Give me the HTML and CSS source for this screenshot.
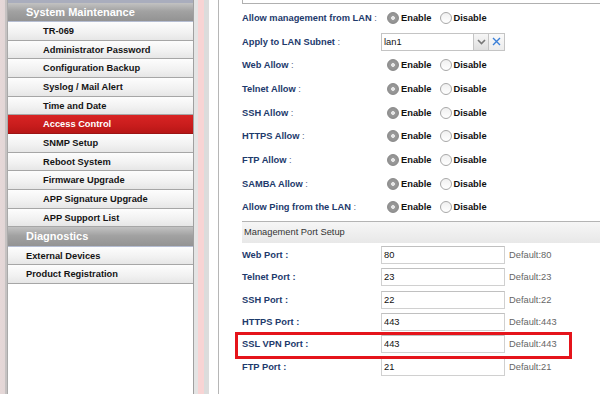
FILE: index.html
```html
<!DOCTYPE html>
<html lang="en">
<head>
  <meta charset="UTF-8">
  <title>Access Control</title>
  <link rel="stylesheet" href="styles.css">
</head>
<body>

  <div class="edge"></div>

  <div class="sidebar">
    <div class="menu-cut"></div>
    <div class="menu-head">System Maintenance</div>
    <div class="menu-item sub">TR-069</div>
    <div class="menu-item sub">Administrator Password</div>
    <div class="menu-item sub">Configuration Backup</div>
    <div class="menu-item sub">Syslog / Mail Alert</div>
    <div class="menu-item sub">Time and Date</div>
    <div class="menu-item sub active">Access Control</div>
    <div class="menu-item sub">SNMP Setup</div>
    <div class="menu-item sub">Reboot System</div>
    <div class="menu-item sub">Firmware Upgrade</div>
    <div class="menu-item sub">APP Signature Upgrade</div>
    <div class="menu-item sub">APP Support List</div>
    <div class="menu-head tall">Diagnostics</div>
    <div class="menu-item">External Devices</div>
    <div class="menu-item">Product Registration</div>
  </div>

  <div class="divider"></div>

  <div class="content">
    <div class="prev-box"></div>

    <div class="allow-list">
      <div class="form-row">
        <span class="label">Allow management from LAN <span class="colon">:</span></span>
        <span class="value">
          <span class="radio on"></span><span class="opt">Enable</span>
          <span class="radio"></span><span class="opt off">Disable</span>
        </span>
      </div>
      <div class="form-row">
        <span class="label">Apply to LAN Subnet <span class="colon">:</span></span>
        <span class="value">
          <span class="select">lan1</span>
          <span class="select-btn">
            <svg width="9" height="6" viewBox="0 0 9 6"><path d="M1 1 L4.5 4.5 L8 1" fill="none" stroke="#777" stroke-width="1.6"/></svg>
          </span>
          <span class="clear-btn">
            <svg width="9" height="9" viewBox="0 0 9 9"><path d="M1 1 L8 8 M8 1 L1 8" fill="none" stroke="#3a7fd8" stroke-width="1.4"/></svg>
          </span>
        </span>
      </div>
      <div class="form-row">
        <span class="label">Web Allow <span class="colon">:</span></span>
        <span class="value">
          <span class="radio on"></span><span class="opt">Enable</span>
          <span class="radio"></span><span class="opt off">Disable</span>
        </span>
      </div>
      <div class="form-row">
        <span class="label">Telnet Allow <span class="colon">:</span></span>
        <span class="value">
          <span class="radio on"></span><span class="opt">Enable</span>
          <span class="radio"></span><span class="opt off">Disable</span>
        </span>
      </div>
      <div class="form-row">
        <span class="label">SSH Allow <span class="colon">:</span></span>
        <span class="value">
          <span class="radio on"></span><span class="opt">Enable</span>
          <span class="radio"></span><span class="opt off">Disable</span>
        </span>
      </div>
      <div class="form-row">
        <span class="label">HTTPS Allow <span class="colon">:</span></span>
        <span class="value">
          <span class="radio on"></span><span class="opt">Enable</span>
          <span class="radio"></span><span class="opt off">Disable</span>
        </span>
      </div>
      <div class="form-row">
        <span class="label">FTP Allow <span class="colon">:</span></span>
        <span class="value">
          <span class="radio on"></span><span class="opt">Enable</span>
          <span class="radio"></span><span class="opt off">Disable</span>
        </span>
      </div>
      <div class="form-row">
        <span class="label">SAMBA Allow <span class="colon">:</span></span>
        <span class="value">
          <span class="radio on"></span><span class="opt">Enable</span>
          <span class="radio"></span><span class="opt off">Disable</span>
        </span>
      </div>
      <div class="form-row">
        <span class="label">Allow Ping from the LAN <span class="colon">:</span></span>
        <span class="value">
          <span class="radio on"></span><span class="opt">Enable</span>
          <span class="radio"></span><span class="opt off">Disable</span>
        </span>
      </div>
    </div>

    <div class="section-head">Management Port Setup</div>

    <div class="port-list">
      <div class="port-row">
        <span class="label">Web Port :</span>
        <input class="port-input" type="text" value="80">
        <span class="default">Default:80</span>
      </div>
      <div class="port-row">
        <span class="label">Telnet Port :</span>
        <input class="port-input" type="text" value="23">
        <span class="default">Default:23</span>
      </div>
      <div class="port-row">
        <span class="label">SSH Port :</span>
        <input class="port-input" type="text" value="22">
        <span class="default">Default:22</span>
      </div>
      <div class="port-row">
        <span class="label">HTTPS Port :</span>
        <input class="port-input" type="text" value="443">
        <span class="default">Default:443</span>
      </div>
      <div class="port-row">
        <span class="label">SSL VPN Port :</span>
        <input class="port-input" type="text" value="443">
        <span class="default">Default:443</span>
      </div>
      <div class="port-row">
        <span class="label">FTP Port :</span>
        <input class="port-input" type="text" value="21">
        <span class="default">Default:21</span>
      </div>
    </div>

    <div class="highlight"></div>
  </div>

</body>
</html>
```

FILE: styles.css
```css
html, body {
  height: 100%;
}

body {
  margin: 0;
  display: flex;
  overflow: hidden;
  font-family: 'Liberation Sans', Arial, sans-serif;
  font-size: 9.3px;
  background: #fff;
}

/* left page edge */
.edge {
  width: 7px;
  flex: none;
  background: linear-gradient(to right, #e6d8d8 0, #e2d6d6 5px, #c6c2c2 5px, #c6c2c2 7px);
}

/* side menu */
.sidebar {
  width: 185px;
  flex: none;
  border-left: 1px solid #a9a9a9;
  border-right: 1px solid #a0a0a0;
  background: #fff;
}

.menu-cut {
  height: 3px;
  background: #a9adbd;
}

.menu-head {
  height: 19px;
  line-height: 19px;
  padding-left: 18px;
  font-size: 11px;
  font-weight: bold;
  color: #fff;
  background: linear-gradient(#c2c2c2, #a2a2a2 45%, #939393);
  border-bottom: 1px solid #b5bdd2;
  box-sizing: border-box;
}

.menu-head.tall {
  height: 19.4px;
  line-height: 19px;
}

.menu-item {
  height: 18.67px;
  line-height: 18px;
  padding-left: 18px;
  box-sizing: border-box;
  font-weight: bold;
  color: #141414;
  background: linear-gradient(#fdfdfd, #f1f1f1 60%, #e6e6e6);
  border-bottom: 1px solid #a6a6a6;
}

.menu-item.sub {
  padding-left: 35px;
}

.menu-item.active {
  color: #fff;
  background: linear-gradient(#d82424, #c81c1c 60%, #b71616);
  border-bottom-color: #9c1414;
}

/* strips between menu and page */
.divider {
  width: 24px;
  flex: none;
  border-right: 1px solid #b6b6b6;
  background: linear-gradient(to right, #e4e4e4 0, #e4e4e4 4px, #f8d4d4 4px, #f8d4d4 10px, #dcdcdc 10px, #dcdcdc 15px, #fff 15px);
}

/* main page */
.content {
  flex: 1;
  position: relative;
  padding-left: 23px;
}

.prev-box {
  height: 3px;
  border-left: 1px solid #b0b0b0;
  border-bottom: 1px solid #b0b0b0;
}

.allow-list {
  padding-top: 2.15px;
}

.form-row,
.port-row {
  display: flex;
  align-items: center;
  height: 23.69px;
}

.port-row {
  height: 22.34px;
}

.label {
  width: 139px;
  flex: none;
  font-weight: bold;
  color: #1d3a6c;
}

.colon {
  font-weight: normal;
  color: #5a6a88;
}

.value {
  display: flex;
  align-items: center;
}

.radio {
  width: 10px;
  height: 10px;
  margin-left: 6px;
  border-radius: 50%;
  border: 1px solid #a8a8a8;
  background: linear-gradient(#f0f0f0, #fff);
}

.radio.on {
  border-color: #8a8a8a;
  background: radial-gradient(circle, #e6e6e6 0, #e6e6e6 1.6px, #9a9a9a 2.2px, #8c8c8c);
}

.opt {
  margin-left: 2px;
  margin-right: 3px;
  font-weight: bold;
  color: #111;
}

.opt.off {
  margin-left: 1px;
}

/* subnet picker */
.select {
  width: 93px;
  height: 18px;
  box-sizing: border-box;
  border: 1px solid #c4c4c4;
  line-height: 16px;
  padding-left: 2px;
  color: #111;
}

.select-btn,
.clear-btn {
  width: 15px;
  height: 18px;
  box-sizing: border-box;
  display: flex;
  align-items: center;
  justify-content: center;
  border: 1px solid #c4c4c4;
  border-left: none;
  background: linear-gradient(#f6f6f6, #dedede);
}

.clear-btn {
  width: 16px;
  background: linear-gradient(#fafafa, #ececec);
}

/* port section */
.section-head {
  margin-top: 1.65px;
  height: 22px;
  box-sizing: border-box;
  border-top: 1px solid #b4b4b4;
  line-height: 21px;
  padding-left: 2px;
  color: #333;
  background: linear-gradient(#f6f6f6, #e8e8e8);
}

.port-list {
  padding-top: 1px;
}

.port-input {
  width: 124px;
  height: 18px;
  box-sizing: border-box;
  margin: 0;
  padding: 0 0 0 2px;
  border: 1px solid #d0d0d0;
  border-top-color: #c0c0c0;
  font-family: 'Liberation Sans', Arial, sans-serif;
  font-size: 9.3px;
  color: #111;
  outline: none;
}

.default {
  margin-left: 4px;
  color: #666;
}

/* red annotation frame */
.highlight {
  position: absolute;
  left: 16px;
  top: 332px;
  width: 337px;
  height: 27px;
  box-sizing: border-box;
  border: 3.5px solid #e5141b;
}
```
